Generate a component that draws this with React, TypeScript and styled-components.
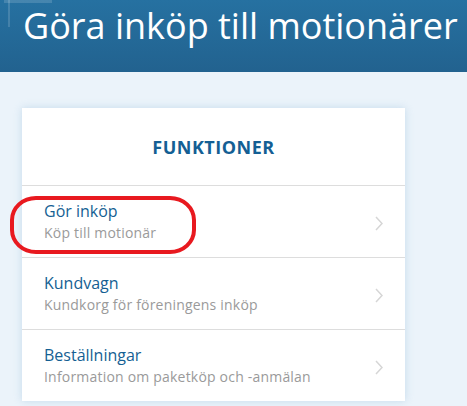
import styled, { createGlobalStyle } from 'styled-components';

const GlobalStyle = createGlobalStyle`
  html, body {
    margin: 0;
    padding: 0;
    background: #ebf3fa;
    font-family: "Open Sans", "Liberation Sans", sans-serif;
  }
`;

const Page = styled.div`
  width: 467px;
  height: 406px;
  overflow: hidden;
  background: #ebf3fa;
`;

const Header = styled.header`
  position: relative;
  height: 72px;
  background: linear-gradient(#2671a1, #22628f);
  padding: 0 0 0 23px;
  box-sizing: border-box;
`;

const Title = styled.h1`
  margin: 0;
  padding-top: 2px;
  color: #ffffff;
  font-weight: 400;
  font-size: 36px;
  line-height: 48px;
  white-space: nowrap;
`;

const Ornament = styled.svg`
  position: absolute;
  left: 0;
  top: 0;
`;

const Main = styled.main`
  padding: 36px 0 0 22px;
`;

const Card = styled.section`
  position: relative;
  width: 383px;
  background: #ffffff;
  box-shadow: 0 0 8px rgba(150, 190, 220, 0.45);
`;

const CardHeader = styled.h2`
  margin: 0;
  height: 77px;
  display: flex;
  align-items: center;
  justify-content: center;
  color: #145f94;
  font-size: 18px;
  font-weight: 700;
  letter-spacing: 0.5px;
  border-bottom: 1px solid #dddddd;
`;

const Row = styled.a<{ $last?: boolean }>`
  display: flex;
  align-items: center;
  justify-content: space-between;
  height: 71px;
  padding: 0 22px 0 22px;
  box-sizing: content-box;
  border-bottom: ${({ $last }) => ($last ? 'none' : '1px solid #dddddd')};
  text-decoration: none;
  cursor: pointer;
`;

const RowText = styled.div`
  display: flex;
  flex-direction: column;
  gap: 1px;
`;

const RowTitle = styled.span`
  color: #155f93;
  font-size: 16px;
  line-height: 21px;
`;

const RowSub = styled.span`
  color: #9a9a9a;
  font-size: 14px;
  line-height: 19px;
  letter-spacing: 0.2px;
`;

const Chevron = styled.svg`
  flex: none;
  margin-top: 4px;
`;

const Highlight = styled.div`
  position: absolute;
  left: -12px;
  top: 88px;
  width: 178px;
  height: 50px;
  border: 4px solid #e8191f;
  border-radius: 26px / 24px;
  pointer-events: none;
`;

const items = [
  { title: 'Gör inköp', sub: 'Köp till motionär' },
  { title: 'Kundvagn', sub: 'Kundkorg för föreningens inköp' },
  { title: 'Beställningar', sub: 'Information om paketköp och -anmälan' },
];

const App = () => (
  <Page>
    <GlobalStyle />
    <Header>
      <Ornament width="60" height="30" viewBox="0 0 60 30">
        <path d="M4 1.5 H52" stroke="rgba(255,255,255,0.15)" strokeWidth="3" />
        <path d="M9 0 V27" stroke="rgba(255,255,255,0.15)" strokeWidth="2" />
      </Ornament>
      <Title>Göra inköp till motionärer</Title>
    </Header>
    <Main>
      <Card>
        <CardHeader>FUNKTIONER</CardHeader>
        {items.map((item, i) => (
          <Row key={item.title} $last={i === items.length - 1}>
            <RowText>
              <RowTitle>{item.title}</RowTitle>
              <RowSub>{item.sub}</RowSub>
            </RowText>
            <Chevron width="8" height="15" viewBox="0 0 8 15">
              <path d="M1 1 L7 7.5 L1 14" fill="none" stroke="#d6d6d6" strokeWidth="1.5" />
            </Chevron>
          </Row>
        ))}
        <Highlight />
      </Card>
    </Main>
  </Page>
);

export default App;
